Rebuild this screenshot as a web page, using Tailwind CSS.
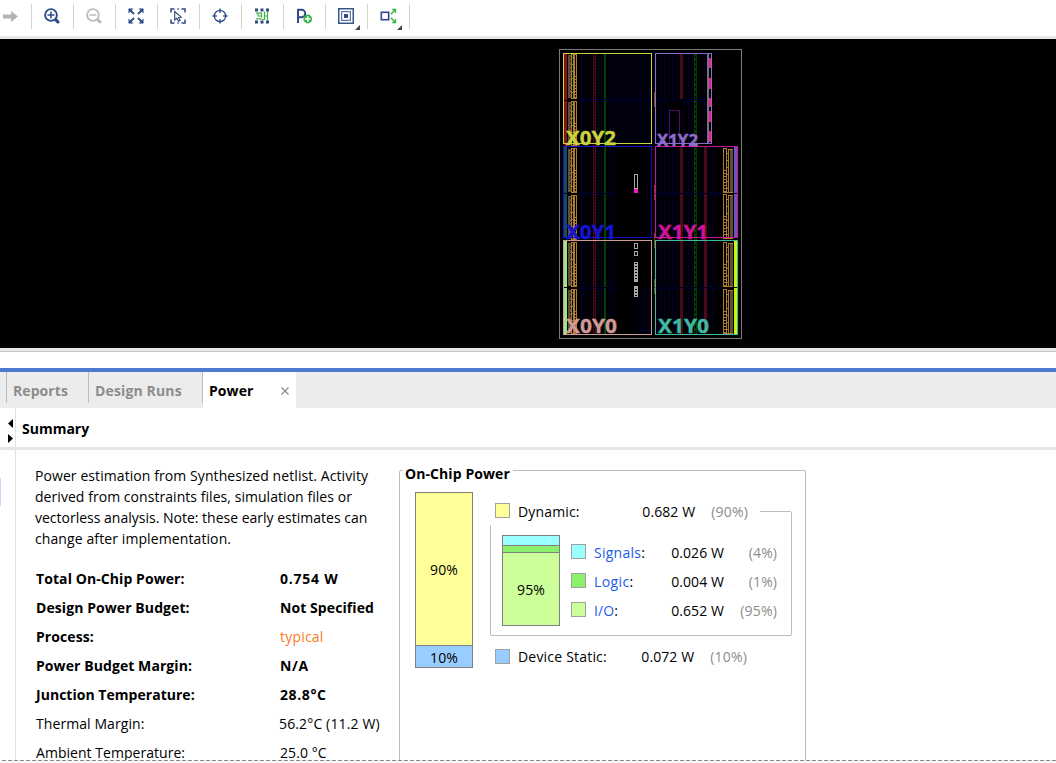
<!DOCTYPE html>
<html lang="en">
<head>
<meta charset="utf-8">
<title>Power</title>
<script src="https://cdn.jsdelivr.net/npm/@tailwindcss/browser@4"></script>
</head>
<body class="h-[763px] w-[1056px] overflow-hidden bg-white font-['Open_Sans','Noto_Sans',sans-serif] text-sm leading-5 tracking-[0.08px] text-black">
<div class="flex h-full flex-col">

<!-- Toolbar -->
<div class="flex h-9 shrink-0 items-start pt-1">
  <div class="flex h-[25px] w-8 shrink-0 items-center border-r border-[#d4d4d4]">
    <svg class="ml-[3px] size-4" viewBox="0 0 16 16"><path fill="#b4b4b4" d="M0 5.500h8V2L15 7.500 8 13V9.500H0z"/></svg>
  </div>
  <div class="flex h-[25px] w-[42px] shrink-0 items-center justify-center border-r border-[#d4d4d4] pr-px pb-px">
    <svg class="size-4" viewBox="0 0 16 16" fill="none" stroke="#2e4b85"><circle cx="7" cy="7" r="5.900" stroke-width="1.900"/><path stroke-width="1.500" d="M3.500 7h7M7 3.500v7"/><path stroke-width="3.200" stroke-linecap="round" d="M12.300 12.300l1.600 1.600"/></svg>
  </div>
  <div class="flex h-[25px] w-[42px] shrink-0 items-center justify-center border-r border-[#d4d4d4] pr-px pb-px">
    <svg class="size-4" viewBox="0 0 16 16" fill="none" stroke="#bdbdbd"><circle cx="7" cy="7" r="5.900" stroke-width="1.900"/><path stroke-width="1.500" d="M3.500 7h7"/><path stroke-width="3.200" stroke-linecap="round" d="M12.300 12.300l1.600 1.600"/></svg>
  </div>
  <div class="flex h-[25px] w-[42px] shrink-0 items-center justify-center border-r border-[#d4d4d4] pr-px pb-px">
    <svg class="size-4" viewBox="0 0 16 16" fill="#2e4b85" stroke="#2e4b85"><path stroke="none" d="M.5.500h5l-5 5zM15.500.500h-5l5 5zM.5 15.500h5l-5-5zM15.500 15.500h-5l5-5z"/><path stroke-width="1.800" d="M2 2l4 4M14 2l-4 4M2 14l4-4M14 14l-4-4"/></svg>
  </div>
  <div class="flex h-[25px] w-[42px] shrink-0 items-center justify-center border-r border-[#d4d4d4] pr-px pb-px">
    <svg class="size-4" viewBox="0 0 16 16" fill="none" stroke="#2e4b85"><path stroke-width="1.500" d="M1 4.500V1h3.500M11.500 1H15v3.500M15 11.500V15h-3.500M4.500 15H1v-3.500M7.300 1h1.400M7.300 15h1.400"/><path stroke-width="1.100" d="M4.700 3.500v8.500l2.200-1.800 1.600 3 1.600-.8-1.500-2.900 2.600-.3z"/></svg>
  </div>
  <div class="flex h-[25px] w-[42px] shrink-0 items-center justify-center border-r border-[#d4d4d4] pr-px pb-px">
    <svg class="size-4" viewBox="0 0 16 16" fill="none" stroke="#2e4b85"><circle cx="8" cy="8" r="5.700" stroke-width="1.200"/><path stroke-width="1.400" d="M8 .5v4.300M8 11.200v4.300M.5 8h4.300M11.200 8h4.300"/></svg>
  </div>
  <div class="flex h-[25px] w-[42px] shrink-0 items-center justify-center border-r border-[#d4d4d4] pr-px pb-px">
    <svg class="size-4" viewBox="0 0 16 16" fill="none"><path fill="#2e4b85" d="M1 .5h3V3.500H1zM6.500.500h3V3.500h-3zM12 .5h3V3.500h-3zM1 12.500h3v3H1zM6.500 12.500h3v3h-3zM12 12.500h3v3h-3z"/><path stroke="#43ad4b" stroke-width="1.200" d="M2 5.200h5.500v4.500M2 10.800h5.500M4 5.200v2.800h3.500M10.500 3.500v8H8M13.500 3.500v9M10.500 8h3"/></svg>
  </div>
  <div class="flex h-[25px] w-[42px] shrink-0 items-center justify-center border-r border-[#d4d4d4] pr-px pb-px">
    <svg class="h-4 w-[17px]" viewBox="0 0 17 16" fill="none"><path stroke="#2e4b85" stroke-width="2" d="M2 15V1M2 1.800h3.500a3.700 3.700 0 0 1 0 7.400H2"/><circle cx="11.800" cy="11" r="4.400" fill="#3db54a"/><path stroke="#fff" stroke-width="1.500" d="M9 11h5.600M11.800 8.200v5.600"/></svg>
  </div>
  <div class="relative flex h-[25px] w-[42px] shrink-0 items-center justify-center border-r border-[#d4d4d4] pr-px pb-px">
    <svg class="size-4" viewBox="0 0 16 16" fill="none" stroke="#2e4b85"><rect x=".75" y=".75" width="14.500" height="14.500" stroke-width="1.400"/><rect x="3.600" y="3.600" width="8.800" height="8.800" stroke-width="1.200" stroke="#5f77a5"/><path fill="#2e4b85" stroke="none" d="M6 6h4v4H6z"/></svg>
    <svg class="absolute right-[7px] -bottom-px size-[5px]" viewBox="0 0 5 5"><path fill="#444" d="M5 0v5H0z"/></svg>
  </div>
  <div class="relative flex h-[25px] w-[42px] shrink-0 items-center justify-center border-r border-[#d4d4d4] pr-px pb-px">
    <svg class="h-4 w-[17px]" viewBox="0 0 17 16" fill="none"><rect x="1.300" y="4.300" width="7.400" height="7.400" stroke="#2e4b85" stroke-width="1.600"/><path fill="#3db54a" d="M11.500.700h4.700v4.700zM11.500 15.300h4.700v-4.700z"/><path stroke="#3db54a" stroke-width="1.500" d="M11 6.200l3-3.500M11 9.800l3 3.500"/></svg>
    <svg class="absolute right-[7px] -bottom-px size-[5px]" viewBox="0 0 5 5"><path fill="#444" d="M5 0v5H0z"/></svg>
  </div>
</div>
<div class="h-[3px] shrink-0 bg-[#e8e8e8]"></div>

<!-- Device view -->
<div class="flex h-[309px] shrink-0 bg-black pl-[550px]">
  <svg class="h-[309px] w-[200px]" viewBox="550 39 200 309" fill="none" shape-rendering="crispEdges">
    <defs>
      <pattern id="cols" x="581" y="0" width="4" height="10" patternUnits="userSpaceOnUse"><path fill="#00002e" d="M0 0h1v10H0z"/></pattern>
      <pattern id="colsR" x="660" y="0" width="4" height="10" patternUnits="userSpaceOnUse"><path fill="#00002e" d="M0 0h1v10H0z"/></pattern>
      <g id="half">
        <path fill="#5d5038" d="M568 2h3v43h-3z"/>
        <path stroke="#0a0a50" stroke-dasharray="1 3" d="M570.500 4v40"/>
        <path stroke="#b07c2c" d="M571.500 2v43M576.500 1v44M571 1.500h6M571 45.500h6"/>
        <path stroke="#b07c2c" stroke-width="2" d="M574 1v44"/>
        <path stroke="#b07c2c" stroke-dasharray="1 2" d="M575.500 23v22"/>
        <path stroke="#b07c2c" stroke-dasharray="1 6" d="M572.500 4v40"/>
        <path stroke="#460a18" d="M593.500 0v46M595.500 0v46"/>
        <path stroke="#460a18" stroke-dasharray="1 2" d="M594.500 0v46"/>
        <path fill="#004000" d="M604 0h2v46h-2z"/>
      </g>
      <g id="red"><path fill="#4a0a18" d="M0 0h3v46H0z"/></g>
      <g id="grn"><path stroke="#003c00" d="M.5 0v46M2.500 0v46"/><path stroke="#003c00" stroke-dasharray="3 2" d="M1.500 0v46"/></g>
      <g id="bankR">
        <path fill="#5d5038" d="M730 2h3v43h-3z"/>
        <path stroke="#b07c2c" d="M723.500 1v45M726.500 2v43M728.500 2v43M723 1.500h4M728 2.500h5M723 45.500h10"/>
        <path stroke="#b07c2c" stroke-width="2" stroke-dasharray="1 2" d="M725 23v22"/>
        <path stroke="#b07c2c" stroke-dasharray="1 6" d="M727.500 6v38"/>
      </g>
    </defs>
    <path stroke="#7b7b7b" d="M559.500 49.500h182v289h-182z"/>

    <!-- X0 column -->
    <path fill="url(#cols)" d="M580 54h71v89h-71zM580 147h36v91h-36zM580 241h36v93h-36zM637 287h14v47h-14z"/>
    <path stroke="#00002e" d="M578 99.500h73M578 101.500h73M578 192.500h37M578 194.500h37M578 286.500h37M578 288.500h37M637 330.500h14"/>
    <use href="#half" y="53"/><use href="#half" y="100"/>
    <use href="#half" y="147"/><use href="#half" y="194"/>
    <use href="#half" y="241"/><use href="#half" y="288"/>
    <path fill="#8b1212" d="M564 54h3v92h-3z"/>
    <path fill="#154b60" d="M564 147h3v91h-3z"/>
    <path fill="#9be58b" d="M564 241h3v93h-3z"/>

    <!-- X1 column -->
    <path fill="url(#colsR)" d="M656 54h50v89h-50zM656 147h58v91h-58zM656 241h58v93h-58z"/>
    <path stroke="#00002e" d="M656 99.500h50M656 101.500h50M656 192.500h66M656 194.500h66M656 286.500h66M656 288.500h66"/>
    <use href="#red" x="680" y="53"/>
    <use href="#red" x="680" y="147"/><use href="#red" x="680" y="194"/><use href="#red" x="680" y="241"/><use href="#red" x="680" y="288"/>
    <use href="#red" x="704" y="147"/><use href="#red" x="704" y="194"/><use href="#red" x="704" y="241"/><use href="#red" x="704" y="288"/>
    <use href="#grn" x="694" y="53"/><use href="#grn" x="694" y="100"/><use href="#grn" x="694" y="147"/><use href="#grn" x="694" y="194"/><use href="#grn" x="694" y="241"/><use href="#grn" x="694" y="288"/>
    <use href="#bankR" y="147"/><use href="#bankR" y="193"/><use href="#bankR" y="241"/><use href="#bankR" y="288"/>
    <path fill="#000" d="M669 101h13v42h-13z"/>
    <path stroke="#4b0f72" d="M669.500 143v-32.500h10V143"/>
    <path fill="#757575" d="M707 54h2v89h-2z"/>
    <path fill="#ff1493" d="M709 58h2v10h-2zM709 78h2v11h-2zM709 98h2v9h-2zM709 111h2v11h-2zM709 131h2v11h-2z"/>
    <path fill="#6f52c8" d="M734 147h3v91h-3z"/>
    <path fill="#cdf500" d="M734 241h3v93h-3z"/>

    <path fill="#7d4a14" d="M654 92h1v15h-1zM654 185h1v15h-1zM654 233h1v15h-1zM654 279h1v15h-1z"/>
    <path fill="#000" d="M564 100h14v1h-14zM564 193h174v1H564zM564 287h174v1H564z"/>

    <!-- Placed cells -->
    <path stroke="#a8a8a8" d="M634.500 174.500h3v14h-3zM634.500 243.500h3v5h-3zM634.500 251.500h3v4h-3zM634.500 262.500h3v19h-3zM634.500 286.500h3v10h-3z"/>
    <path stroke="#a8a8a8" stroke-width="2" stroke-dasharray="2 1" d="M636 264v17M636 287v9"/>
    <path fill="#ff14c8" d="M634 189h4v4h-4z"/>

    <!-- Clock region outlines -->
    <path stroke="#1010c8" d="M563.500 146.500h88v91h-88z"/>
    <path stroke="#cc1499" d="M655.500 146.500h82v91h-82z"/>
    <path stroke="#c8d43f" d="M563.500 53.500h88v90h-88z"/>
    <path stroke="#8f6bd0" d="M655.500 53.500h56v90h-56z"/>
    <path stroke="#d09a94" d="M563.500 240.500h88v94h-88z"/>
    <path stroke="#3fb8a0" d="M655.500 240.500h82v94h-82z"/>

    <g font-family="'Noto Sans', 'Open Sans', sans-serif" font-weight="700" font-size="20" letter-spacing="0" stroke-width=".4">
      <text x="566" y="144.500" fill="#c8d43f" stroke="#c8d43f" textLength="50" lengthAdjust="spacingAndGlyphs">X0Y2</text>
      <text x="657" y="146" fill="#8f6bd0" stroke="#8f6bd0" font-size="16.500" textLength="41" lengthAdjust="spacingAndGlyphs">X1Y2</text>
      <text x="566" y="238.500" fill="#1414d2" stroke="#1414d2" textLength="50" lengthAdjust="spacingAndGlyphs">X0Y1</text>
      <text x="658" y="238.500" fill="#cc1499" stroke="#cc1499" textLength="50" lengthAdjust="spacingAndGlyphs">X1Y1</text>
      <text x="566" y="332.500" fill="#d09a94" stroke="#d09a94" textLength="51" lengthAdjust="spacingAndGlyphs">X0Y0</text>
      <text x="658" y="332.500" fill="#3fb8a0" stroke="#3fb8a0" textLength="51" lengthAdjust="spacingAndGlyphs">X1Y0</text>
    </g>
  </svg>
</div>
<div class="h-1 shrink-0 border-b border-[#c6c6c6] bg-[#e8e8e8]"></div>
<div class="h-4 shrink-0"></div>

<!-- Tabs -->
<div class="flex h-10 shrink-0 border-t-4 border-[#4a7bd0] bg-[#ececec] pl-[6px] font-bold text-[#8c8c8c]">
  <div class="h-[31px] w-[82px] border-l border-[#bcbcbc] pt-[9px] pl-[6px]">Reports</div>
  <div class="h-[31px] w-[114px] border-l border-[#bcbcbc] pt-[9px] pl-[6px] tracking-[0.14px]">Design Runs</div>
  <div class="h-[31px] w-px bg-[#bcbcbc]"></div>
  <div class="flex h-9 w-[93px] items-start justify-between bg-white pt-[9px] pr-[7px] pl-[6px] text-black">Power
    <svg class="mt-[6px] size-2" viewBox="0 0 8 8"><path stroke="#8c8c8c" stroke-width="1.300" d="M.5.500l7 7M7.500.500l-7 7"/></svg>
  </div>
</div>

<!-- Panel -->
<div class="flex h-[352px] shrink-0">
  <div class="flex w-4 shrink-0 flex-col border-r border-[#e2e2e2]">
    <div class="flex h-[39px] flex-col items-end gap-[6px] pt-[11px] pr-[2px]">
      <svg class="h-[9px] w-[5px]" viewBox="0 0 5 9"><path d="M5 0v9L0 4.500z"/></svg>
      <svg class="h-[9px] w-[5px]" viewBox="0 0 5 9"><path d="M0 0v9l5-4.500z"/></svg>
    </div>
    <div class="h-[3px] w-4 bg-[#e6e6e6]"></div>
    <div class="mt-7 h-7 w-px bg-[#c9d9fa]"></div>
  </div>
  <div class="flex min-w-0 grow flex-col">
    <div class="flex h-[42px] shrink-0 items-center border-b-[3px] border-[#e6e6e6] pt-[2px] pl-[6px] font-bold tracking-[0px]">Summary</div>
    <div class="flex h-[310px] overflow-hidden">
      <div class="w-[383px] shrink-0 pt-[15px] pl-[19px]">
        <div class="leading-[21px] whitespace-nowrap">
          <p>Power estimation from Synthesized netlist. Activity</p>
          <p class="tracking-[0.05px]">derived from constraints files, simulation files or</p>
          <p class="tracking-[0px]">vectorless analysis. Note: these early estimates can</p>
          <p class="tracking-[0.1px]">change after implementation.</p>
        </div>
        <div class="mt-[15px] grid auto-rows-[29px] grid-cols-[244px_1fr] items-center pl-px font-bold whitespace-nowrap">
          <div>Total On-Chip Power:</div><div class="tracking-[0.75px]">0.754 W</div>
          <div>Design Power Budget:</div><div>Not Specified</div>
          <div>Process:</div><div class="font-normal tracking-[0.2px] text-[#fb7a24]">typical</div>
          <div>Power Budget Margin:</div><div class="tracking-[0.7px]">N/A</div>
          <div class="tracking-[0.03px]">Junction Temperature:</div><div class="tracking-[0.6px]">28.8°C</div>
          <div class="font-normal">Thermal Margin:</div><div class="-ml-px font-normal tracking-[0.14px]">56.2°C (11.2 W)</div>
          <div class="font-normal tracking-[0.04px]">Ambient Temperature:</div><div class="font-normal">25.0 °C</div>
        </div>
      </div>

      <!-- On-chip power group -->
      <div class="relative mt-5 h-[300px] w-[407px] shrink-0 rounded-t-[2px] border border-[#bebebe] pt-[21px] pl-[15px]">
        <div class="absolute -top-[7px] left-[3px] bg-white pr-[3px] pl-[2px] leading-5 font-bold">On-Chip Power</div>
        <div class="flex">
          <div class="flex h-[176px] w-[58px] flex-col border border-[#808080] text-center">
            <div class="flex h-[153px] shrink-0 items-center justify-center border-b border-[#808080] bg-[#ffff99] pt-px">90%</div>
            <div class="flex h-[21px] shrink-0 items-center justify-center bg-[#99ccff] pt-[2px]">10%</div>
          </div>
          <div class="ml-[17px] w-[302px]">
            <div class="relative mt-[5px] flex h-7 w-[270px] items-center bg-white pl-[5px]">
              <div class="-mt-px size-[15px] border border-[#a0a0a0] bg-[#ffff99]"></div>
              <div class="ml-2 pt-px tracking-[0.15px]">Dynamic:</div>
              <div class="ml-auto pt-px">0.682 W</div>
              <div class="mr-3 ml-4 pt-px tracking-[0.2px] text-[#8c8c8c]">(90%)</div>
            </div>
            <div class="-mt-[14px] flex h-[125px] rounded-[2px] border border-[#bebebe] pt-[23px] pl-[11px]">
              <div class="flex h-[91px] w-[58px] flex-col border border-[#808080]">
                <div class="h-[10px] shrink-0 border-b border-[#808080] bg-[#99ffff]"></div>
                <div class="h-[7px] shrink-0 border-b border-[#808080] bg-[#8cf06c]"></div>
                <div class="flex grow items-center justify-center bg-[#ccff99] pt-px">95%</div>
              </div>
              <div class="ml-[11px] grid auto-rows-[29px] grid-cols-[23px_54px_76px_53px] items-center pt-[3px]">
                <div class="-mt-[2px] size-[15px] border border-[#a0a0a0] bg-[#99ffff]"></div><div class="tracking-[0.25px]"><span class="text-[#1a5ce6]">Signals</span>:</div><div class="text-right">0.026 W</div><div class="text-right text-[#8c8c8c]">(4%)</div>
                <div class="-mt-[2px] size-[15px] border border-[#a0a0a0] bg-[#8cf06c]"></div><div class="tracking-[0.4px]"><span class="text-[#1a5ce6]">Logic</span>:</div><div class="text-right">0.004 W</div><div class="text-right text-[#8c8c8c]">(1%)</div>
                <div class="-mt-[2px] size-[15px] border border-[#a0a0a0] bg-[#ccff99]"></div><div><span class="text-[#1a5ce6]">I/O</span>:</div><div class="text-right">0.652 W</div><div class="text-right tracking-[0.2px] text-[#8c8c8c]">(95%)</div>
              </div>
            </div>
            <div class="mt-[7px] flex h-7 w-[269px] items-center pl-[5px]">
              <div class="-mt-[2px] size-[15px] border border-[#a0a0a0] bg-[#99ccff]"></div>
              <div class="ml-2 tracking-[0.2px]">Device Static:</div>
              <div class="ml-auto">0.072 W</div>
              <div class="mr-3 ml-4 tracking-[0.2px] text-[#8c8c8c]">(10%)</div>
            </div>
          </div>
        </div>
      </div>
    </div>
  </div>
</div>
<div class="h-[3px] shrink-0 bg-[#f7f7f7]"><div class="h-px bg-[repeating-linear-gradient(90deg,#f7f7f7_0_2px,#8c8c8c_2px_6px)]"></div></div>
</div>
</body>
</html>
